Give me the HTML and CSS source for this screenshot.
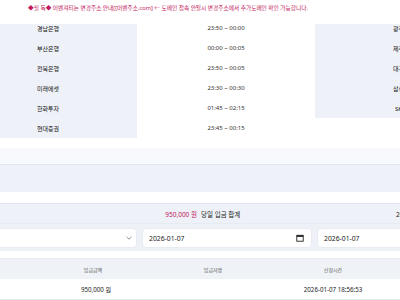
FILE: index.html
```html
<!DOCTYPE html>
<html lang="ko">
<head>
<meta charset="utf-8">
<link rel="stylesheet" href="styles.css">
</head>
<body>
<div class="page">
  <div class="notice">◆필 독◆ 어벤져티는 변경주소 안내[[어벤주소.com] ← 도메인 접속 안될시 변경주소에서 추가도메인 확인 가능합니다.</div>
  <div class="bank">
    <div class="name">경남은행</div><div class="time">23:50 ~ 00:00</div><div class="name">광주은행</div><div class="time">23:50 ~ 00:00</div>
    <div class="name">부산은행</div><div class="time">00:00 ~ 00:05</div><div class="name">제주은행</div><div class="time">23:50 ~ 00:05</div>
    <div class="name">전북은행</div><div class="time">23:50 ~ 00:05</div><div class="name">대구은행</div><div class="time">23:50 ~ 00:05</div>
    <div class="name">미래에셋</div><div class="time">23:30 ~ 00:30</div><div class="name">삼성증권</div><div class="time">23:45 ~ 00:15</div>
    <div class="name">한화투자</div><div class="time">01:45 ~ 02:15</div><div class="name">SK증권</div><div class="time">23:30 ~ 00:30</div>
    <div class="name">현대증권</div><div class="time">23:45 ~ 00:15</div><div class="empty"></div><div class="empty"></div>
  </div>
  <div class="card-head"></div>
  <div class="card-body"></div>
  <div class="section">
    <div class="stats">
      <div class="stat"><span class="label">총 입금 합계</span><span class="val red">950,000 원</span></div>
      <div class="stat"><span class="label">당일 입금 합계</span><span class="val">20,000,000 원</span></div>
    </div>
    <div class="filters">
      <div class="input"><span>전체</span>
        <svg class="chev" width="6" height="4" viewBox="0 0 6 4"><path d="M0.5 0.8 L3 3.2 L5.5 0.8" fill="none" stroke="#777" stroke-width="0.8"/></svg>
      </div>
      <div class="input"><span>2026-01-07</span>
        <svg class="cal" width="8" height="8" viewBox="0 0 8 8"><rect x="0.8" y="1.3" width="6.4" height="5.9" fill="none" stroke="#222" stroke-width="0.9"/><rect x="0.8" y="1.3" width="6.4" height="1.6" fill="#222"/></svg>
      </div>
      <div class="input"><span>2026-01-07</span>
        <svg class="cal" width="8" height="8" viewBox="0 0 8 8"><rect x="0.8" y="1.3" width="6.4" height="5.9" fill="none" stroke="#222" stroke-width="0.9"/><rect x="0.8" y="1.3" width="6.4" height="1.6" fill="#222"/></svg>
      </div>
    </div>
  </div>
  <div class="list">
    <div class="row head"><div></div><div>입금금액</div><div>입금자명</div><div>신청시간</div><div>상태</div></div>
    <div class="row"><div></div><div class="amt">950,000 원</div><div></div><div>2026-01-07 18:56:53</div><div></div></div>
  </div>
</div>
</body>
</html>
```

FILE: styles.css
```css
html, body {
  margin: 0;
  padding: 0;
  background: #ffffff;
  overflow: hidden;
}
body {
  width: 400px;
  height: 300px;
  font-family: "Noto Sans", "Noto Sans CJK KR", sans-serif;
  font-size: 6px;
  color: #222;
}
.page {
  position: relative;
  display: flow-root;
  width: 640px;
  margin-left: -41px;
}
.notice {
  position: absolute;
  top: 0;
  left: 0;
  right: 0;
  height: 24px;
  line-height: 16px;
  padding-left: 69px;
  background: #fff;
  color: #c2185b;
  font-size: 5.7px;
  z-index: 2;
  white-space: nowrap;
}
.bank {
  margin-top: 18px;
  display: grid;
  grid-template-columns: repeat(4, 178px);
  grid-auto-rows: 20px;
}
.bank > div {
  display: flex;
  align-items: center;
  justify-content: center;
  white-space: nowrap;
}
.bank .name {
  background: #eef2f8;
  color: #111;
}
.bank .time {
  color: #333;
}
.card-head {
  margin-top: 10px;
  height: 16px;
  background: #f8f9fc;
  border-bottom: 1px solid #dfe5f1;
}
.card-body {
  height: 27px;
  background: #eef2f8;
}
.section {
  margin-top: 11px;
  border-top: 1px solid #dfe5f1;
  background: #eef2f8;
  padding-bottom: 3px;
}
.stats {
  display: grid;
  grid-template-columns: repeat(2, 240px);
  height: 19px;
  border-bottom: 1px solid #e6eaf1;
  font-size: 6.5px;
}
.stat {
  display: flex;
  align-items: center;
  justify-content: space-between;
  padding: 0 2px;
  white-space: nowrap;
}
.val.red {
  color: #c2185b;
}
.filters {
  display: flex;
  gap: 5px;
  padding: 4px 0 0 8px;
}
.input {
  width: 170px;
  height: 20px;
  box-sizing: border-box;
  background: #fff;
  border-radius: 4px;
  border: 1px solid #e7ebf2;
  display: flex;
  align-items: center;
  justify-content: space-between;
  padding: 0 7px 0 6px;
  color: #222;
  font-size: 6.8px;
}
.input:first-child {
  padding-right: 4px;
}
.list {
  margin-top: 7px;
}
.row {
  display: grid;
  grid-template-columns: 74px repeat(4, 120px);
  height: 20px;
  border-bottom: 1px solid #e3e7ee;
  font-size: 6.2px;
}
.row > div {
  display: flex;
  align-items: center;
  justify-content: center;
  white-space: nowrap;
}
.row .amt {
  padding-left: 6px;
}
.row.head {
  background: #eff2f7;
  color: #555;
  border-bottom: none;
  border-top: 1px solid #e6eaf1;
  font-size: 5px;
}
```
